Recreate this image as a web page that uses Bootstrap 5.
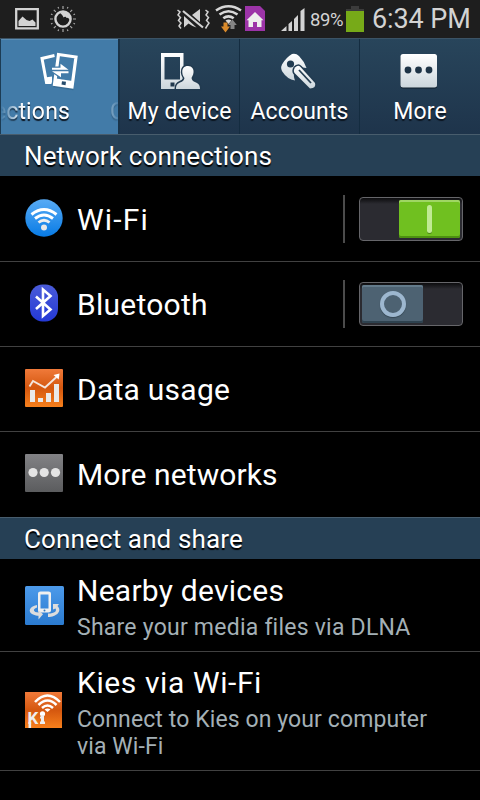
<!doctype html>
<html lang="en">

<head>
  <meta charset="utf-8">
  <meta name="viewport" content="width=device-width, initial-scale=1">
  <title>Settings</title>
  <link href="https://cdn.jsdelivr.net/npm/bootstrap@5.3.3/dist/css/bootstrap.min.css" rel="stylesheet">
  <style>
    body {
      background: #000;
      color: #fff;
      font-family: Roboto, "Liberation Sans", sans-serif;
      width: 480px;
      height: 800px;
      overflow: hidden;
    }

    svg {
      display: block;
      flex: none;
    }

    .status-bar {
      height: 38px;
      background: #1e1e1e;
      color: #d3d3d3;
    }

    .battery-text {
      width: 35px;
      margin-left: 5px;
      padding-top: 3px;
      font-size: 18.5px;
      letter-spacing: -.35px;
    }

    .clock {
      margin-left: 7px;
      font-size: 27px;
      line-height: 38px;
      letter-spacing: -.1px;
    }

    .tabs {
      height: 96px;
      background: linear-gradient(#28455b, #1e344b);
      border-top: 1px solid #3c5365;
    }

    .tab-item {
      width: 120px;
      height: 95px;
      padding-top: 12px;
      border-right: 1px solid #142c40;
    }

    .tab-item:last-child {
      border-right: 0;
    }

    .tab-item.current {
      background: #427ba8;
      border-left: 1px solid #1c3c54;
      border-right: 2px solid #193349;
      box-shadow: inset 0 1px #5b8db4;
    }

    .tab-label {
      font-size: 23px;
      line-height: 34px;
      letter-spacing: .15px;
      text-shadow: 0 2px 1px #0b1520;
    }

    .marquee {
      width: 117px;
      -webkit-mask-image: linear-gradient(to right, transparent, #000 22px, #000 90px, transparent 119px);
      mask-image: linear-gradient(to right, transparent, #000 22px, #000 90px, transparent 119px);
    }

    .marquee-end {
      width: 69px;
    }

    .marquee-start {
      margin-left: 40px;
    }

    .section-title {
      height: 42px;
      padding-left: 24px;
      background: #264055;
      border-top: 1px solid #485d6d;
      font-size: 26px;
      line-height: 42px;
      letter-spacing: .13px;
      text-shadow: 0 2px 1px #000;
    }

    .setting {
      height: 85px;
      padding-left: 25px;
      border-bottom: 1px solid #414141;
    }

    .setting.first {
      height: 86px;
    }

    .setting.last {
      border-bottom: 0;
    }

    .setting.nearby {
      height: 93px;
    }

    .setting.kies {
      height: 119px;
    }

    .setting-icon {
      width: 52px;
      padding-bottom: 2px;
    }

    .last .setting-icon {
      padding-bottom: 3px;
    }

    .setting-name {
      padding-top: 1px;
      font-size: 30px;
      line-height: 36px;
      letter-spacing: .25px;
    }

    .setting-name.loose {
      letter-spacing: .6px;
    }

    .first .setting-name.loose {
      padding-top: 2px;
      letter-spacing: 1.2px;
    }

    .last .setting-name {
      padding-top: 0;
      letter-spacing: .1px;
    }

    .nearby .setting-name,
    .kies .setting-name {
      padding-top: 4px;
      margin-bottom: 5px;
    }

    .nearby .setting-icon {
      padding-bottom: 0;
    }

    .setting-note {
      color: #a4b0b6;
      font-size: 23px;
      line-height: 27px;
      letter-spacing: .23px;
    }

    .kies .setting-note {
      letter-spacing: .1px;
    }

    .kies .setting-name {
      padding-top: 3px;
    }

    .switch-box {
      height: 48px;
      margin-right: 17px;
      padding-left: 14px;
      border-left: 2px solid #4b4b4b;
    }

    .switch-track {
      width: 104px;
      height: 44px;
      padding: 2px;
      background: linear-gradient(#0c0c0e, #2b2b31 6px);
      border: 1px solid #66666a;
      border-radius: 4px;
    }

    .switch-thumb {
      width: 61px;
      height: 38px;
      border-radius: 2px;
    }

    .switch-thumb.on {
      background: #70c020;
      box-shadow: inset 0 2px #9fd663, inset 0 -2px #4d9110;
    }

    .switch-thumb.off {
      background: #4d6272;
      box-shadow: inset 0 2px #637b8b, inset 0 -2px #2e424f;
    }

    .bar-mark {
      width: 5px;
      height: 28px;
      background: #c0ea94;
      border-radius: 3px;
      box-shadow: 0 1px #4a8a14;
    }

    .ring-mark {
      width: 26px;
      height: 26px;
      border: 4px solid #9db7cf;
      border-radius: 50%;
      box-shadow: 0 1px 1px #344653;
    }
  </style>
</head>

<body>
  <header class="status-bar d-flex align-items-center">
    <svg width="175" height="38" viewBox="0 0 175 38">
      <path d="M16.200 9.200h21.600v19.100h-21.600z" fill="none" stroke="#d3d3d3" stroke-width="2.300" />
      <path d="M18.500 26v-5l4-4.500 4 3.500 3 1 3-1.500 3 3v3.500z" fill="#d3d3d3" />
      <circle cx="63" cy="19" r="7.600" fill="none" stroke="#d3d3d3" stroke-width="2.400" />
      <path d="M60 13c3-2 6-1.500 8 .5 2 2 3 4 2 6.500-1.500-2-2.500-2.500-3.500-2-.5-1.500-2-1.500-3-.5-.5-2-2-3-3.500-4.500z" fill="#d3d3d3" />
      <path d="M63 6v3M63 29v3M50 19h3M73 19h3M53.800 9.800l2 2M70.200 26.200l2 2M53.800 28.200l2-2M70.200 11.800l2-2M58 7l.7 1.500M67.300 29.500l.7 1.500M51 14l1.500.7M73.500 23.300l1.500.7M58 31l.7-1.500M67.300 8.500l.7-1.500M51 24l1.500-.7M73.500 14.700l1.500-.7" stroke="#a9a9a9" stroke-width="1.200" />
    </svg>
    <svg width="130" height="38" viewBox="175 0 130 38">
      <g fill="none" stroke="#d3d3d3" stroke-width="1.500">
        <path d="M177.500 10l2.500 2-2 3 2.500 2.500-2 3 2.500 2.500-2 3 2 2.500" />
        <path d="M205.500 10l2.500 2-2 3 2.500 2.500-2 3 2.500 2.500-2 3-1.500 2.500" />
        <path d="M183 11l20 16.500" stroke-width="2.200" />
      </g>
      <path d="M184 16l12.500 11.500-4-1.500-4-2.500-4.500 4zM192 15l8-6v13z" fill="#d3d3d3" />
      <g fill="none" stroke="#d8d8d8" stroke-width="2.600">
        <path d="M216 10.500q12.500-8.500 25 0" />
        <path d="M219.500 14.500q9-6.500 18 0" />
        <path d="M223.300 18.200q5.200-3.800 10.400 0" />
      </g>
      <path d="M225.500 20.500q3-2 6 0l-3 3.500z" fill="#d8d8d8" />
      <path d="M223.500 22.500h4v4h2.500l-4.500 6-4.500-6h2.500z" fill="#d98a2b" />
      <path d="M230.500 29v-4h-2.300l4.300-5.500 4.300 5.500h-2.300v4z" fill="#858585" />
      <path d="M245 6h15l5 5v20h-20z" fill="#9c34a8" />
      <path d="M246.500 20.200l8.500-8.200 8.500 8.200h-2v6.800h-4.500v-5h-4v5h-4.500v-6.800z" fill="#eee" />
      <path d="M281 31l5.500-5v5zM288.500 31v-7l3.500-3v10zM294 31v-12l4-4v16zM300.500 31v-20l4-3v23z" fill="#d3d3d3" />
    </svg>
    <span class="battery-text text-nowrap">89%</span>
    <svg width="20" height="38" viewBox="345 0 20 38">
      <path d="M351 6h8v3h5v2.500h-18v-2.500h5z" fill="#3b3b3b" />
      <path d="M346 11h18v21h-18z" fill="#77aa18" />
    </svg>
    <span class="clock text-nowrap">6:34 PM</span>
  </header>

  <nav class="tabs d-flex">
    <div class="tab-item current d-flex flex-column align-items-center overflow-hidden">
      <svg width="44" height="44" viewBox="0 0 44 44">
        <g fill="none" stroke="#24506f" stroke-width="3" opacity=".35" transform="translate(0 1.500)">
          <path d="M21 3.500l17 2.500-4 30-17-2.500z" />
        </g>
        <path d="M16.500 4.500l-12.500 3 4.500 24h5" fill="none" stroke="#fff" stroke-width="3" />
        <path d="M7 26.500l7-1v6l-5.500 1.500z" fill="#fff" />
        <path d="M20.500 3.500l17.500 2.500-4 30-17.500-2.500z" fill="#427ba8" stroke="#fff" stroke-width="3.200" />
        <path d="M18 27.500l16.500 2.500-1 6-16.500-2.500z" fill="#fff" />
        <path d="M24 30.200l4 .6-.5 3.400-4-.6z" fill="#254b6b" />
        <path d="M14 16.700h8.500v-3.900l8 5.900h-16.500zM30.500 20.300v2h-7.500v3.900l-9-5.900z" fill="#fff" stroke="#427ba8" stroke-width="2.400" paint-order="stroke" />
      </svg>
      <div class="tab-label marquee d-flex text-nowrap overflow-hidden">
        <span class="marquee-end d-flex justify-content-end">ections</span>
        <span class="marquee-start">C</span>
      </div>
    </div>
    <div class="tab-item d-flex flex-column align-items-center">
      <svg width="44" height="44" viewBox="0 0 44 44">
        <defs>
          <linearGradient id="silver" x2="0" y2="1">
            <stop stop-color="#fff" />
            <stop offset="1" stop-color="#ccd6dc" />
          </linearGradient>
        </defs>
        <path d="M3 2h22.500v36h-22.500zM6.500 6v22.500h15.500v-22.500z" fill="url(#silver)" fill-rule="evenodd" />
        <path d="M12.500 31.500h4v4h-4z" fill="#20384d" />
        <path d="M30 15c4 0 6 3 5.500 6.500-.3 3-1.500 4-2 5.500.5 3 2 3.500 4.500 4.500 2.500 1 4 2.500 4 6.500h-24c0-4 1.500-5.500 4-6.500 3-1.200 4-2 4.500-4.500-1-1.500-2-2.500-2.200-5.500-.3-4 1.700-6.500 5.700-6.500z" fill="url(#silver)" stroke="#223b50" stroke-width="3" paint-order="stroke" />
      </svg>
      <div class="tab-label text-nowrap">My device</div>
    </div>
    <div class="tab-item d-flex flex-column align-items-center">
      <svg width="44" height="44" viewBox="0 0 44 44">
        <path d="M14 3q4-1 7 2 5 5 7.500 12-4-1-7 0l-5 4.500q-1.500 3 .5 8-8-1.500-12-8-3-4-1-8 4-7 10-10.500z" fill="url(#silver)" />
        <path d="M17 16.500q3-3 5.500-.5l14.500 16q1.500 5-5 5.500l-15.500-15.500q-1.500-2.500.5-5.500z" fill="url(#silver)" stroke="#223b50" stroke-width="3" paint-order="stroke" />
        <path d="M21 19l12 13" stroke="#263f52" stroke-width="1.800" />
        <circle cx="12.500" cy="13" r="3.600" fill="#213b50" />
      </svg>
      <div class="tab-label text-nowrap">Accounts</div>
    </div>
    <div class="tab-item d-flex flex-column align-items-center">
      <svg width="44" height="44" viewBox="0 0 44 44">
        <rect x="2.500" y="4" width="36.500" height="33.500" rx="2.500" fill="#0e1d2a" />
        <rect x="2.500" y="3" width="36.500" height="33.500" rx="2.500" fill="url(#silver)" />
        <g fill="#1e3447">
          <circle cx="10" cy="19" r="3.400" />
          <circle cx="20.500" cy="19" r="3.400" />
          <circle cx="31" cy="19" r="3.400" />
        </g>
      </svg>
      <div class="tab-label text-nowrap">More</div>
    </div>
  </nav>

  <main>
    <div class="section-title">Network connections</div>

    <div class="setting first d-flex align-items-center">
      <div class="setting-icon">
        <svg width="38" height="38" viewBox="0 0 38 38">
          <defs>
            <linearGradient id="sky" x2="0" y2="1">
              <stop stop-color="#58abf5" />
              <stop offset="1" stop-color="#087be5" />
            </linearGradient>
          </defs>
          <circle cx="19" cy="19" r="18.700" fill="url(#sky)" />
          <g fill="none" stroke="#fff" stroke-width="2.900">
            <path d="M6.500 15.500q12.500-10 25 0" />
            <path d="M10 19.500q9-7 18 0" />
            <path d="M13.500 23.500q5.500-4.500 11 0" stroke="#eee" />
          </g>
          <circle cx="19" cy="28.500" r="3" fill="#e8e8e8" />
        </svg>
      </div>
      <div class="setting-name loose">Wi-Fi</div>
      <div class="switch-box ms-auto d-flex align-items-center">
        <div class="switch-track d-flex justify-content-end">
          <div class="switch-thumb on d-flex align-items-center justify-content-center">
            <div class="bar-mark"></div>
          </div>
        </div>
      </div>
    </div>

    <div class="setting d-flex align-items-center">
      <div class="setting-icon">
        <svg width="38" height="38" viewBox="0 0 38 38">
          <defs>
            <linearGradient id="indigo" x2="0" y2="1">
              <stop stop-color="#4a5bd8" />
              <stop offset="1" stop-color="#2439d6" />
            </linearGradient>
          </defs>
          <rect x="5" y="0.500" width="28" height="37" rx="12.500" fill="url(#indigo)" />
          <path d="M11 12.500l14.500 13-7.500 6.500v-26.500l7.500 6.500-14.500 13" fill="none" stroke="#fff" stroke-width="2.600" />
        </svg>
      </div>
      <div class="setting-name">Bluetooth</div>
      <div class="switch-box ms-auto d-flex align-items-center">
        <div class="switch-track d-flex">
          <div class="switch-thumb off d-flex align-items-center justify-content-center">
            <div class="ring-mark"></div>
          </div>
        </div>
      </div>
    </div>

    <div class="setting d-flex align-items-center">
      <div class="setting-icon">
        <svg width="38" height="38" viewBox="0 0 38 38">
          <defs>
            <linearGradient id="orange" x2="0" y2="1">
              <stop stop-color="#f07a3a" />
              <stop offset=".5" stop-color="#d4570f" />
              <stop offset="1" stop-color="#f7801c" />
            </linearGradient>
          </defs>
          <rect width="38" height="38" rx="1" fill="url(#orange)" />
          <path d="M5 21h5v12h-5zM13 29h5v4h-5zM21 24h5v9h-5zM29 15h5v18h-5z" fill="#e9e9e9" />
          <path d="M4.500 17.500l3.500-5.500 12 6.500 11.500-10.500" fill="none" stroke="#f4e6dd" stroke-width="1.900" />
          <path d="M28.500 6l6-1.500-.8 6z" fill="#fff" />
        </svg>
      </div>
      <div class="setting-name">Data usage</div>
    </div>

    <div class="setting last d-flex align-items-center">
      <div class="setting-icon">
        <svg width="38" height="38" viewBox="0 0 38 38">
          <defs>
            <linearGradient id="steel" x2="0" y2="1">
              <stop stop-color="#828285" />
              <stop offset="1" stop-color="#5b5c5e" />
            </linearGradient>
          </defs>
          <rect width="38" height="38" rx="1" fill="url(#steel)" />
          <g fill="#e4e4e4">
            <circle cx="8" cy="18.500" r="4.600" />
            <circle cx="19.200" cy="18.500" r="4.600" />
            <circle cx="30.500" cy="18.500" r="4.600" />
          </g>
        </svg>
      </div>
      <div class="setting-name">More networks</div>
    </div>

    <div class="section-title">Connect and share</div>

    <div class="setting nearby d-flex align-items-center">
      <div class="setting-icon">
        <svg width="39" height="39" viewBox="0 0 39 39">
          <defs>
            <linearGradient id="azure" x2="0" y2="1">
              <stop stop-color="#4c9aea" />
              <stop offset="1" stop-color="#2b7bd0" />
            </linearGradient>
          </defs>
          <rect width="39" height="39" rx="1.500" fill="url(#azure)" />
          <path d="M15.500 5.500h8q2.500 0 2.500 2v17q0 2-2.500 2h-8q-2.500 0-2.500-2v-17q0-2 2.500-2zm0 3v14h8v-14z" fill="#f0f0f0" fill-rule="evenodd" />
          <circle cx="19.500" cy="24.500" r="1" fill="#3179bd" />
          <path d="M12 19c-8 1.500-9.500 7-4 9.500 2 1 4 1.200 5.500 1.200v3.800l4.500-5.200-4.500-4.300v2.500c-5 0-6.500-3.500-1.500-5z" fill="#ddd" />
          <path d="M23 31v-3.500c7 0 9-2.500 7.500-5l-2.500 1v-5.500h6l-1.500 2c5 5-1 11-9.500 11z" fill="#ddd" />
        </svg>
      </div>
      <div>
        <div class="setting-name">Nearby devices</div>
        <div class="setting-note text-nowrap">Share your media files via DLNA</div>
      </div>
    </div>

    <div class="setting kies d-flex align-items-center">
      <div class="setting-icon">
        <svg width="37" height="36" viewBox="0 0 37 36">
          <rect width="37" height="36" fill="url(#orange)" />
          <g fill="none" stroke="#fff" stroke-width="2.500">
            <path d="M10 10q12.500-13 25 0" />
            <path d="M13.500 13q9-9 18 0" />
            <path d="M17 16q5.500-5 11 0" />
          </g>
          <path d="M19.500 17.500q3-2 6 0l-3 2.500z" fill="#fff" />
          <text x="2.500" y="32" fill="#eee" font-size="17" font-weight="700">K</text>
          <rect x="3.500" y="30" width="2.600" height="6" fill="#eee" />
          <circle cx="17.500" cy="21.800" r="2.600" fill="#fff" />
          <path d="M16 23h3v6.500h1v2.500h-5v-2.500h1v-3h-1v-2h1z" fill="#eee" />
        </svg>
      </div>
      <div>
        <div class="setting-name loose">Kies via Wi-Fi</div>
        <div class="setting-note text-nowrap">Connect to Kies on your computer<br>via Wi-Fi</div>
      </div>
    </div>
  </main>

  <script src="https://cdn.jsdelivr.net/npm/bootstrap@5.3.3/dist/js/bootstrap.bundle.min.js"></script>
</body>

</html>
